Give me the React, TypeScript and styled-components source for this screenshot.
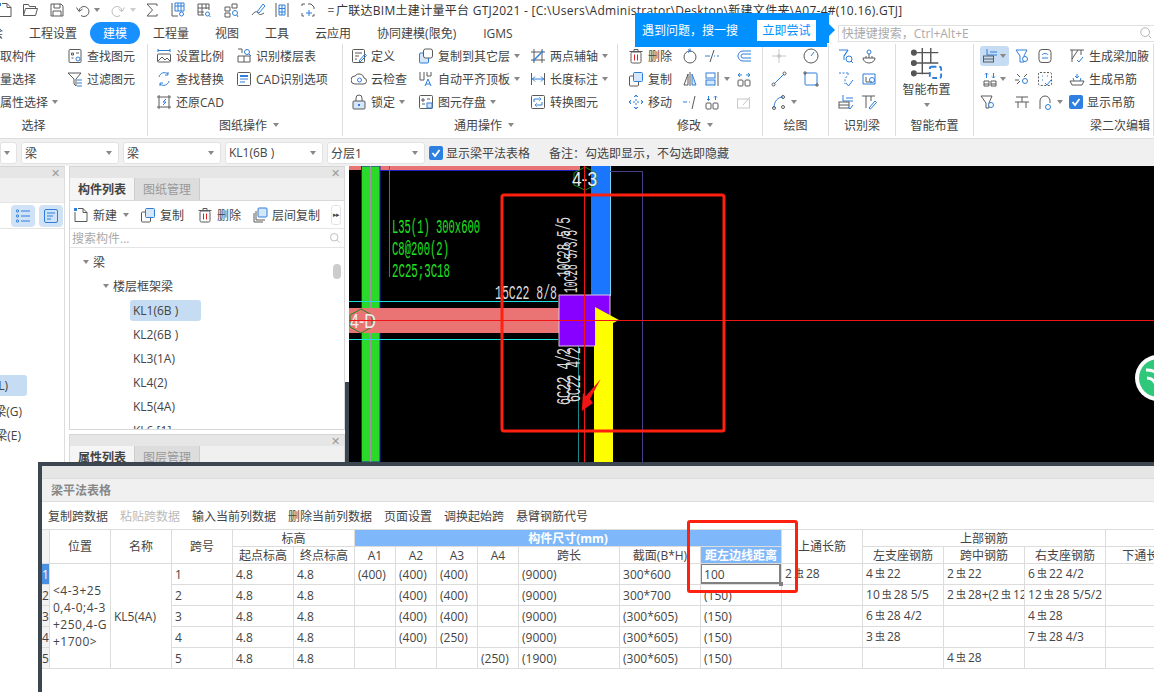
import React, { ReactNode } from 'react';
import styled, { createGlobalStyle } from 'styled-components';

const D = '#5a5a5a';
const B = '#2e7fdc';
const L = '#d5e7fb';
const FONT = '"Open Sans", "Noto Sans CJK SC", sans-serif';

const Global = createGlobalStyle`
  html, body { margin: 0; padding: 0; width: 1154px; height: 692px; overflow: hidden; background: #fff; }
  body { font-family: ${FONT}; font-size: 12px; color: #444; }
  * { box-sizing: border-box; }
`;

const icons: Record<string, ReactNode> = {
  newFile: <><path d="M5 1.5h5l4 4v9H2V5" /><path d="M10 1.5v4h4" /><rect x="1" y="1" width="3" height="3" fill={B} stroke="none" /></>,
  folder: <path d="M1.5 13.5v-11h5l1 2h6v2M1.5 13.5l2-7h12l-2 7z" />,
  save: <><path d="M2 2h10l2 2v10H2z" /><path d="M5 2v4h6V2M4 14V9h8v5" /></>,
  undo: <><path d="M4 9a5 5 0 1 1 2 4.5" /><path d="M1.5 5.5l2.5 4 3.5-2.5" /></>,
  redo: <g stroke="#bbb"><path d="M12 9a5 5 0 1 0-2 4.5" /><path d="M14.5 5.500l-2.500 4-3.500-2.500" /></g>,
  sigma: <path d="M13 4V2H3l5.500 6L3 14h10v-2" />,
  tblSearch: <><path d="M2 1v13h6" /><path d="M5 1h9v8H5z" stroke={B} /><path d="M5 4h9M8 1v8M11 1v8" stroke={B} /><circle cx="11.500" cy="12" r="2" stroke={B} /></>,
  gridSearch: <><path d="M2 2h11v6M2 2v11h6M2 6h11M2 10h6M6 2v11M10 2v5" /><circle cx="11.500" cy="12" r="2" stroke={B} /><path d="M13 13.500l1.500 1.500" stroke={B} /></>,
  pointSearch: <><path d="M2 5h5v4H2zM2 11h5v4H2zM9 2h5v4H9z" /><circle cx="12" cy="11" r="2.500" stroke={B} /><path d="M14 13l1 2" stroke={B} /></>,
  pen: <><path d="M2 13c3-4 5-4 6-2s3 2 6 0" /><path d="M7 10l6-8 2 2-6 7z" stroke={B} /></>,
  cols: <><path d="M2 1v14M14 1v14" /><path d="M5 3h6v10H5zM5 6.500h6M5 10h6M8 3v10" stroke={B} /></>,
  dashAdd: <><path d="M2 4V2h3M8 2h3l3 3v2M14 12v2h-2M4 14H2v-3" /><path d="M9 8v6M6 11h6" stroke={B} /></>,
  find: <><rect x="2" y="1.500" width="12" height="13" rx="1" /><path d="M4.500 5h2v2h-2zM9 5h3M4.500 10h2" /><circle cx="11" cy="11" r="2" stroke={B} /></>,
  filter: <><path d="M1 2h13L9 8v7l-2-2V8z" /><path d="M10 9h5M10 12h5M10 15h5" stroke={B} /></>,
  scale: <><path d="M2 1v3M14 1v3M2 2.500h12" stroke={B} /><rect x="1.500" y="6" width="13" height="8" rx="1" /><path d="M2 13l4-4 3 3 2-2 3 3" /></>,
  floors: <><path d="M2 1h4v4M2 8h12M8 8v6M2 8v6h12V8" /><circle cx="11" cy="4" r="2.500" stroke={B} /><path d="M13 6l2 2" stroke={B} /></>,
  replace: <g stroke={B}><path d="M3 6a5.500 5.500 0 0 1 9-3M13 10a5.500 5.500 0 0 1-9 3" /><path d="M12 1v3h-3M4 15v-3h3" /></g>,
  cad: <><rect x="1.500" y="1.500" width="13" height="13" rx="1" /><path d="M4 8h8M4 11h5" stroke={B} /><path d="M4 5h8" stroke={B} strokeWidth="2" /></>,
  restore: <><path d="M3 1v14M13 1v14M1 3h14M1 13h14" /><path d="M10 5L7 8h3L7 11" stroke={B} /></>,
  define: <><rect x="1.500" y="1.500" width="12" height="13" rx="1" /><path d="M4 5h7M4 8h4M4 11h2" /><path d="M8 13l6-7 1.500 1.500L9 14z" stroke={B} /></>,
  cloud: <><path d="M4 13a4 4 0 0 1 0-8 5 5 0 0 1 9 2 3 3 0 0 1-1 6z" /><circle cx="8.500" cy="9" r="2" stroke={B} /></>,
  lock: <><rect x="2" y="7" width="12" height="8" rx="1" fill={L} stroke={D} /><path d="M5 7V4a3 3 0 0 1 6 0v3" /><path d="M8 10v2" stroke={B} strokeWidth="2" /></>,
  copyLayer: <><rect x="1.500" y="5" width="9" height="10" rx="1" stroke={B} fill={L} /><rect x="5.500" y="1" width="9" height="9" rx="2" fill="#fff" /></>,
  align: <><path d="M2 1v8h4V1M9 1v4h4V1" /><path d="M7 15l3-7 3 7M8 13h4" stroke={B} /></>,
  store: <><rect x="1.500" y="1.500" width="13" height="13" rx="1" /><path d="M4 5h2v2H4zM9 5h3M4 10h3" /><rect x="9" y="9" width="5" height="5" fill={L} stroke={B} /></>,
  twoPoint: <><path d="M4 1v14M12 1v14M1 4h14M1 12h14" /><path d="M3 13L13 3" stroke={B} strokeWidth="1.500" /></>,
  length: <><path d="M1.500 2v12M14.500 2v12" /><path d="M2 8h12M5 5.500L2.500 8 5 10.500M11 5.500L13.500 8 11 10.500" stroke={B} /></>,
  convert: <><rect x="1.500" y="1.500" width="13" height="13" rx="1" /><path d="M4 8V5h5M9 3.500L11 5 9 6.500M12 8v3H7M7 9.500L5 11l2 1.500" stroke={B} /></>,
  del: <><rect x="3" y="4" width="10" height="11" rx="1.500" /><path d="M1.500 3.500h13M6 3.500V1.500h4v2" /><path d="M6.500 6.500v6M9.500 6.500v6" stroke="#e02020" /></>,
  copy: <><rect x="1.500" y="5" width="9" height="10" rx="1" /><rect x="5.500" y="1.500" width="9" height="9" rx="1" fill={L} stroke={B} /></>,
  layerCopy: <><path d="M2 6v9h9M4 4v9h9" /><rect x="6" y="1" width="9" height="9" rx="1" fill={L} stroke={B} /></>,
  move: <g stroke={B}><path d="M8 1v14M1 8h14" strokeDasharray="2 2" /><path d="M6 3l2-2 2 2M6 13l2 2 2-2M3 6L1 8l2 2M13 6l2 2-2 2" /></g>,
  rotate: <><circle cx="8" cy="9" r="6" /><path d="M8 3V0.500" stroke={B} /><path d="M6 1.500L8.500 3 6 4.500" stroke={B} /></>,
  extend: <><path d="M1 8h5M10 8h1M13 8h2" stroke={B} /><path d="M10 2L6 14" /></>,
  offset: <g stroke={B}><path d="M15 3H7a5 5 0 0 0 0 10h8" /><path d="M15 6H7a2 2 0 0 0 0 4h8" /></g>,
  mirror: <><path d="M8 1v14" /><path d="M6 3L2 14h4z" /><path d="M10 3l4 11h-4z" fill={L} stroke={B} /></>,
  alignBox: <><path d="M14 1v14" /><rect x="2" y="2" width="9" height="5" stroke={B} /><rect x="2" y="9" width="9" height="5" fill={L} stroke={B} /></>,
  split: <><rect x="2" y="9" width="5" height="6" rx="1" /><rect x="9" y="9" width="5" height="6" rx="1" /><path d="M4.500 2v4M3 5l1.500 1.500L6 5M11.500 2v4M10 3.500L11.500 2 13 3.500" stroke={B} /></>,
  brk: <><path d="M1 8h4M7 8h1" stroke={B} /><path d="M13 2l-3 13" /></>,
  join: <><rect x="2" y="9" width="5" height="6" rx="1" /><rect x="9" y="9" width="5" height="6" rx="1" /><path d="M4 2L2 4l2 2M12 2l2 2-2 2M2 4h4M10 4h4" stroke={B} /></>,
  edit: <g stroke="#c8c8c8"><rect x="1.500" y="5" width="12" height="9" /><path d="M7 11l7-8" /></g>,
  cross: <g stroke="#c8c8c8"><path d="M8 1v5M8 10v5M1 8h5M10 8h5" /><circle cx="8" cy="8" r="1.500" fill="#c8c8c8" /></g>,
  gauge: <><circle cx="8" cy="8" r="7" /><path d="M8 8l3-4" stroke={B} /></>,
  line: <><path d="M3 13L13 3" stroke={B} /><circle cx="2.500" cy="13.500" r="1.500" /><circle cx="13.500" cy="2.500" r="1.500" /></>,
  rect: <><rect x="2" y="2" width="12" height="12" rx="1" stroke={B} /><path d="M1 1h2v2H1zM13 13h2v2h-2z" /></>,
  arc: <><path d="M3 14C3 7 7 3 12 3" stroke={B} /><circle cx="3" cy="14" r="1.500" /><circle cx="12" cy="3" r="1.500" /><circle cx="12" cy="13" r="1.500" /></>,
  beamCheck: <g stroke={B}><path d="M1 2h9L6 8v4" /><path d="M10 2L6 8" /><circle cx="11" cy="11" r="3" /><path d="M13 13l2 2" /></g>,
  basket: <><path d="M2 10a6 5 0 0 0 12 0H2z" /><circle cx="8" cy="4" r="2" stroke={B} /><path d="M5 10V8M8 10V6M11 10V8" /></>,
  dashCheck: <g stroke={B}><path d="M1 2h10l-4 6v5" strokeDasharray="2 1.500" /><path d="M8 12l2.500 3L15 9" /></g>,
  beamFind: <><path d="M2 3h12v10H2z" stroke={B} /><path d="M5 6v5h6" /><circle cx="11" cy="9" r="2.500" stroke={B} /></>,
  beamList: <><path d="M5 1v6h10M8 4h7" stroke={B} /><rect x="1" y="8" width="10" height="6" /><path d="M1 11h10" /><path d="M10 13l2 2 3-4" stroke={B} /></>,
  beamPen: <><path d="M1 2h13M5 2v12M10 2v5" /><path d="M8 14l6-7 1.500 1.500L9.500 15z" stroke={B} /></>,
  beamTop: <><path d="M5 1v6h10M8 4h7" stroke={B} /><rect x="1.500" y="8" width="10" height="6" /><path d="M1.500 11h10" /></>,
  funnel: <><path d="M2 2h11l-3 6v6H6V8z" stroke={B} /><circle cx="11" cy="11" r="2.500" stroke={B} fill="#fff" /></>,
  beamBox: <><rect x="2" y="1.500" width="12" height="13" rx="3" /><path d="M5 7c1-2 5-2 6 0M5 10h6" stroke={B} /></>,
  tri: <><path d="M2 10h5v5H2zM9 10h5v5H9zM2 13h5M9 13h5" /><path d="M4.500 2v5M3 3.500L4.500 2 6 3.500M11.500 2v5M10 5.500L11.500 7 13 5.500" stroke={B} /></>,
  spark: <><path d="M3 3l3 3M13 3l-3 3M1 9h4M3 13l3-3" /><circle cx="11" cy="10" r="2.500" stroke={B} /></>,
  dotsCheck: <><rect x="1.500" y="1.500" width="13" height="13" rx="1.500" strokeDasharray="2 1.500" /><path d="M5 5h1M10 5h1M5 9h1" stroke={B} /><path d="M8 12l2 2 4-5" stroke={B} /></>,
  funnelS: <><path d="M1 2h11l-3 7v5H6V9z" /><circle cx="11" cy="11" r="2.500" stroke={B} fill="#fff" /></>,
  hang: <path d="M2 3h12M1 8h14M4 8v6M12 8v6M8 3v5" />,
  loop: <><path d="M3 15V7a5 5 0 0 1 10 0v2" /><circle cx="11" cy="13" r="2.500" stroke={B} /></>,
  haunch: <><path d="M1 2h14M3 2v12M12 2v5" /><path d="M3 11l6-9" /><path d="M8 12l2 2 4-5" stroke={B} /></>,
  basketS: <><path d="M1 10h14l-2 4H3z" /><path d="M8 3v4M6 5l2 2 2-2M4 7l1 3M12 7l-1 3" stroke={B} /></>,
  search: <><circle cx="7" cy="7" r="5" stroke="#aaa" /><path d="M11 11l3 3" stroke="#aaa" /></>,
  viewList: <g stroke={B}><path d="M6 3h9M6 8h9M6 13h9" /><circle cx="2.500" cy="3" r="1.200" /><circle cx="2.500" cy="8" r="1.200" /><circle cx="2.500" cy="13" r="1.200" /></g>,
  viewDetail: <g stroke={B}><rect x="1.500" y="1.500" width="13" height="13" rx="1.500" /><path d="M4 5h8M4 8h6M4 11h4" /></g>,
};

const IconSvg = styled.svg<{ $s: number }>`
  width: ${p => p.$s}px;
  height: ${p => p.$s}px;
  flex: none;
  display: block;
  fill: none;
  stroke: ${D};
  stroke-width: 1;
`;
const Ic = ({ n, s = 16 }: { n: string; s?: number }) => (
  <IconSvg $s={s} viewBox="0 0 16 16">{icons[n]}</IconSvg>
);

const Page = styled.div`
  position: relative;
  width: 1154px;
  height: 692px;
  overflow: hidden;
  display: flex;
  flex-direction: column;
  background: #fff;
`;

/* title bar */
const TitleBar = styled.div`
  height: 20px;
  flex: none;
  display: flex;
  align-items: center;
  margin-left: -3px;
  white-space: nowrap;
`;
const TitleSlot = styled.span<{ $g: number; $w?: number }>`
  margin-left: ${p => p.$g}px;
  width: ${p => p.$w ?? 16}px;
  display: flex;
  justify-content: center;
  color: #666;
`;
const TitleText = styled.span`
  margin-left: 1px;
  font-size: 12px;
  letter-spacing: 0.28px;
  color: #333;
`;
const Tri = styled.i<{ $c?: string }>`
  display: inline-block;
  width: 0;
  height: 0;
  border-left: 3px solid transparent;
  border-right: 3px solid transparent;
  border-top: 4px solid ${p => p.$c ?? '#888'};
`;

/* menu bar */
const MenuBar = styled.div`
  height: 24px;
  flex: none;
  display: flex;
  align-items: center;
  padding-top: 2px;
  white-space: nowrap;
`;
const MenuItem = styled.span<{ $g: number; $on?: boolean }>`
  margin-left: ${p => p.$g}px;
  font-size: 12px;
  color: ${p => (p.$on ? '#fff' : '#444')};
  ${p => (p.$on ? 'background:#1890ff;border-radius:11px;height:22px;width:50px;display:flex;align-items:center;justify-content:center;' : '')}
`;
const SearchBox = styled.div`
  flex: 1;
  margin-left: 325px;
  height: 17px;
  border: 1px solid #e0e0e0;
  border-right: none;
  display: flex;
  align-items: center;
  justify-content: space-between;
  padding: 0 1px 0 3px;
  font-size: 12px;
  color: #aaa;
`;

/* ribbon */
const Ribbon = styled.div`
  height: 95px;
  flex: none;
  display: flex;
  border-bottom: 1px solid #ddd;
`;
const Group = styled.div<{ $w: number; $pad?: number }>`
  width: ${p => p.$w}px;
  flex: none;
  height: 92px;
  border-right: 1px solid #ddd;
  display: flex;
  flex-direction: column;
  padding-left: ${p => p.$pad ?? 0}px;
  overflow: hidden;
`;
const GroupBody = styled.div`
  height: 69px;
  display: flex;
  flex: none;
`;
const Col = styled.div<{ $w?: number }>`
  ${p => (p.$w ? `width:${p.$w}px;flex:none;` : 'flex:1;')}
  display: flex;
  flex-direction: column;
`;
const Item = styled.div`
  height: 23px;
  display: flex;
  align-items: center;
  gap: 4px;
  font-size: 12px;
  white-space: nowrap;
  color: #444;
`;
const SelIcon = styled.span<{ $plain?: boolean }>`
  display: flex;
  align-items: center;
  gap: 2px;
  background: ${p => (p.$plain ? 'transparent' : '#c5dcf2')};
  border-radius: 3px;
  height: 20px;
  padding: 0 3px 0 2px;
`;
const GroupLabel = styled.div<{ $dx?: number; $end?: boolean }>`
  flex: 1;
  display: flex;
  align-items: center;
  justify-content: ${p => (p.$end ? 'flex-end' : 'center')};
  gap: 6px;
  padding-right: ${p => p.$dx ?? 0}px;
  font-size: 12px;
  color: #444;
`;
const BigBox = styled.div`
  display: flex;
  flex-direction: column;
  align-items: center;
  width: 100%;
  padding-right: 16px;
  padding-top: 3px;
  font-size: 12px;
  line-height: 17px;
`;
const BigIcon = styled.svg`
  width: 32px;
  height: 32px;
  margin-bottom: 2px;
`;
const BigCaret = styled(Tri)`
  margin-top: 5px;
`;

/* combo bar */
const ComboBar = styled.div`
  height: 27px;
  flex: none;
  background: #f0f0f0;
  display: flex;
  align-items: center;
  gap: 4px;
`;
const Combo = styled.div<{ $w: number }>`
  width: ${p => p.$w}px;
  height: 22px;
  background: #fff;
  border: 1px solid #e2e2e2;
  border-radius: 3px;
  display: flex;
  align-items: center;
  justify-content: space-between;
  padding: 0 6px 0 3px;
  font-size: 12px;
  color: #444;
`;
const CheckBox = styled.span`
  width: 14px;
  height: 14px;
  background: #2e80e0;
  border-radius: 2px;
  display: flex;
  align-items: center;
  justify-content: center;
  flex: none;
`;
const CheckRow = styled.label`
  display: flex;
  align-items: center;
  gap: 3px;
  font-size: 12px;
  white-space: nowrap;
`;
const Note = styled.span`
  margin-left: 15px;
  font-size: 12px;
  white-space: nowrap;
`;
const Check = () => (
  <CheckBox>
    <svg width="10" height="10" viewBox="0 0 10 10"><path d="M1.500 5l2.500 3 4.500-6" fill="none" stroke="#fff" strokeWidth="1.800" /></svg>
  </CheckBox>
);

/* main */
const Main = styled.div`
  flex: 1;
  display: flex;
  min-height: 0;
`;
const SidePanel = styled.div`
  width: 65px;
  flex: none;
  margin-right: 4px;
  border-right: 1px solid #ddd;
  display: flex;
  flex-direction: column;
  overflow: hidden;
`;
const PanelHead = styled.div`
  height: 12px;
  flex: none;
  background: #e6e6e6;
  border-top: 1px solid #d5d5d5;
  display: flex;
  align-items: center;
  justify-content: flex-end;
  padding-right: 4px;
  color: #999;
  font-size: 11px;
  line-height: 10px;
`;
const EmptyTabs = styled.div`
  height: 25px;
  flex: none;
  background: #f0f0f0;
  border-bottom: 1px solid #e5e5e5;
`;
const ViewBar = styled.div`
  height: 26px;
  flex: none;
  border-bottom: 1px solid #e5e5e5;
  display: flex;
  align-items: center;
  gap: 4px;
  padding-left: 11px;
`;
const ViewBtn = styled.span`
  width: 24px;
  height: 22px;
  background: #cfe2f6;
  border-radius: 4px;
  display: flex;
  align-items: center;
  justify-content: center;
`;
const SideTree = styled.div`
  padding-top: 146px;
  display: flex;
  flex-direction: column;
  width: 27px;
`;
const SideRow = styled.div<{ $on?: boolean; $r?: number }>`
  height: ${p => (p.$on ? 21 : 24)}px;
  margin-bottom: ${p => (p.$on ? 3 : 0)}px;
  display: flex;
  align-items: center;
  justify-content: flex-end;
  padding-right: ${p => p.$r ?? 4}px;
  font-size: 12px;
  white-space: nowrap;
  background: ${p => (p.$on ? '#c5dcf2' : 'transparent')};
  border-radius: 0 3px 3px 0;
`;
const SideLabel = styled.span<{ $on?: boolean }>`
  ${p => (p.$on ? 'margin-right:15px;' : '')}
`;
const MidCol = styled.div`
  width: 276px;
  flex: none;
  display: flex;
  flex-direction: column;
  gap: 4px;
`;
const Panel = styled.div<{ $h?: number }>`
  ${p => (p.$h ? `height:${p.$h}px;flex:none;` : 'flex:1;')}
  border: 1px solid #d8d8d8;
  border-top: none;
  display: flex;
  flex-direction: column;
  overflow: hidden;
  min-height: 0;
`;
const Tabs = styled.div`
  height: 23px;
  flex: none;
  background: #f0f0f0;
  display: flex;
  border-bottom: 1px solid #d8d8d8;
`;
const Tab = styled.span<{ $on?: boolean }>`
  width: 65px;
  display: flex;
  align-items: center;
  justify-content: center;
  font-size: 12px;
  font-weight: ${p => (p.$on ? 700 : 400)};
  color: ${p => (p.$on ? '#444' : '#999')};
  background: ${p => (p.$on ? '#f5f5f5' : '#ddd')};
  border-right: 1px solid #ccc;
`;
const ToolRow = styled.div`
  height: 28px;
  flex: none;
  display: flex;
  align-items: center;
  border-bottom: 1px solid #e5e5e5;
  padding-left: 3px;
  font-size: 12px;
  white-space: nowrap;
`;
const Tool = styled.span<{ $g?: number }>`
  display: flex;
  align-items: center;
  gap: 4px;
  margin-left: ${p => p.$g ?? 0}px;
`;
const ToolCaret = styled(Tri)`
  margin-left: 2px;
`;
const MoreBtn = styled.span`
  margin-left: 11px;
  width: 10px;
  height: 20px;
  border: 1px solid #e5e5e5;
  border-radius: 3px;
  font-size: 7px;
  display: flex;
  align-items: center;
  justify-content: center;
  letter-spacing: -1px;
`;
const SearchRow = styled.div`
  height: 19px;
  flex: none;
  display: flex;
  align-items: center;
  justify-content: space-between;
  padding: 0 3px 0 2px;
  color: #aaa;
  font-size: 12px;
  border-bottom: 1px solid #e5e5e5;
`;
const Tree = styled.div`
  position: relative;
  flex: 1;
  overflow: hidden;
  padding-top: 2px;
  font-size: 12px;
  min-height: 0;
`;
const TreeRow = styled.div<{ $l: number }>`
  height: 24px;
  display: flex;
  align-items: center;
  gap: 4px;
  padding-left: ${p => p.$l}px;
  white-space: nowrap;
`;
const TreeLabel = styled.span<{ $on?: boolean }>`
  height: 21px;
  display: flex;
  align-items: center;
  ${p => (p.$on ? 'background:#c5dcf2;border-radius:3px;width:71px;margin-left:-3px;padding-left:3px;' : '')}
`;
const Thumb = styled.span`
  position: absolute;
  left: 263px;
  top: 16px;
  width: 8px;
  height: 15px;
  border-radius: 4px;
  background: #ccc;
`;
const Splitter = styled.div`
  width: 4px;
  flex: none;
  background: linear-gradient(#fff 216px, #3c4650 216px);
`;
const Canvas = styled.div`
  flex: 1;
  background: #000;
  overflow: hidden;
`;
const CanvasSvg = styled.svg`
  display: block;
  width: 805px;
  height: 296px;
  font-family: "Liberation Mono", monospace;
`;

/* callout */
const Callout = styled.div`
  position: absolute;
  left: 635px;
  top: 13px;
  width: 194px;
  height: 34px;
  background: #0090ff;
  color: #fff;
  display: flex;
  align-items: center;
  justify-content: space-between;
  padding: 0 13px 0 7px;
  font-size: 12px;
  clip-path: polygon(0 0, 100% 0, 100% 30px, 192px 30px, 192px 34px, 0 34px);
`;
const CalloutTip = styled.span`
  position: absolute;
  left: 829px;
  top: 24px;
  width: 0;
  height: 0;
  border-left: 6px solid #0090ff;
  border-top: 6px solid transparent;
  border-bottom: 6px solid transparent;
`;
const CalloutBtn = styled.span`
  width: 59px;
  height: 21px;
  background: #fff;
  color: #0090ff;
  display: flex;
  align-items: center;
  justify-content: center;
`;

/* dialog */
const Dialog = styled.div`
  position: absolute;
  left: 38px;
  top: 462px;
  right: 0;
  bottom: 0;
  background: #fff;
  border-top: 4px solid #3c4650;
  border-left: 4px solid #3c4650;
  display: flex;
  flex-direction: column;
  overflow: hidden;
`;
const DlgStrip = styled.div`
  height: 12px;
  flex: none;
  background: #e6e6e6;
`;
const DlgTitle = styled.div`
  height: 24px;
  flex: none;
  background: #f0f0f0;
  border-top: 1px solid #ddd;
  border-bottom: 1px solid #ddd;
  display: flex;
  align-items: center;
  padding-left: 9px;
  font-size: 12px;
  font-weight: 700;
  color: #888;
`;
const DlgTools = styled.div`
  height: 27px;
  flex: none;
  display: flex;
  align-items: center;
  gap: 12px;
  padding-left: 6px;
  font-size: 12px;
  white-space: nowrap;
`;
const DlgTool = styled.span<{ $off?: boolean }>`
  color: ${p => (p.$off ? '#bbb' : '#444')};
`;
const TableWrap = styled.div`
  flex: 1;
  overflow: hidden;
`;
const Grid = styled.table`
  width: 1145px;
  margin-left: -1px;
  table-layout: fixed;
  border-collapse: collapse;
  font-size: 12px;
  color: #444;
  & th, & td {
    border: 1px solid #dcdcdc;
    padding: 0;
    overflow: hidden;
    white-space: nowrap;
    font-weight: 400;
  }
  & th { height: 17px; line-height: 15px; text-align: center; }
  & td { height: 21px; line-height: 19px; padding-left: 3px; }
`;
const HeadBlue = styled.th`
  && { background: #7fb8fa; color: #fff; font-weight: 700; }
`;
const RowHead = styled.td<{ $on?: boolean }>`
  && {
    padding: 0;
    text-align: center;
    background: ${p => (p.$on ? '#4a90e2' : '#f3f3f3')};
    color: ${p => (p.$on ? '#fff' : '#444')};
  }
`;
const CornerHead = styled.th`
  && { background: #f3f3f3; }
`;
const PosCell = styled.td`
  && {
    white-space: normal;
    text-align: left;
    line-height: 17px;
    letter-spacing: 0.5px;
    padding-left: 3px;
  }
`;
const ActiveCell = styled.td`
  && {
    position: relative;
    overflow: visible;
    box-shadow: inset -2px -2px 0 #808080, inset 1px 1px 0 #808080;
  }
`;
const Handle = styled.i`
  position: absolute;
  right: -2px;
  bottom: -2px;
  width: 4px;
  height: 4px;
  background: #808080;
`;
const Bar = styled.span`
  font-size: 10px;
  margin: 0 2px;
  position: relative;
  top: -1px;
`;

/* annotations */
const RedBox = styled.div`
  position: absolute;
  left: 687px;
  top: 520px;
  width: 111px;
  height: 73px;
  border: 3px solid #ff2010;
  border-radius: 3px;
  pointer-events: none;
`;

const row = (icon: string, label: string, caret = false) => (
  <Item key={label}>
    <Ic n={icon} />
    <span>{label}</span>
    {caret && <Tri />}
  </Item>
);
const ic = (icon: string, caret = false) => (
  <Item key={icon}>
    <Ic n={icon} />
    {caret && <Tri />}
  </Item>
);

const Rb = ({ t }: { t: string }) => {
  const parts = t.split('#');
  return (
    <>
      {parts.map((p, i) => (
        <React.Fragment key={i}>
          {i > 0 && <Bar>虫</Bar>}
          {p}
        </React.Fragment>
      ))}
    </>
  );
};

const rows = [
  ['1', '(400)', '(400)', '(400)', '', '(9000)', '300*600', '100', '2#28', '4#22', '2#22', '6#22 4/2'],
  ['2', '', '(400)', '(400)', '', '(9000)', '300*700', '(150)', '', '10#28 5/5', '2#28+(2#12', '12#28 5/5/2'],
  ['3', '', '(400)', '(400)', '', '(9000)', '(300*605)', '(150)', '', '6#28 4/2', '', '4#28'],
  ['4', '', '(400)', '(250)', '', '(9000)', '(300*605)', '(150)', '', '3#28', '', '7#28 4/3'],
  ['5', '', '', '', '(250)', '(1900)', '(300*605)', '(150)', '', '', '4#28', ''],
];
const colW = [8, 61, 61, 61, 61, 61, 41, 41, 41, 41, 101, 81, 81, 81, 81, 81, 81, 81];

const CadDrawing = () => (
  <CanvasSvg viewBox="349 166 805 296">
    <rect x="349" y="166" width="231" height="4" fill="#e87474" />
    <path d="M362 170.500H580" stroke="#2020c0" />
    <rect x="361.500" y="166" width="18.500" height="296" fill="#2bd92b" stroke="#2020c0" />
    <path d="M370.500 166V462" stroke="#999" />
    <path d="M389.500 166V277" stroke="#1f9a1f" />
    <g fill="#22e022" fontSize="20">
      <text x="392" y="233" textLength="88" lengthAdjust="spacingAndGlyphs">L35(1) 300x600</text>
      <text x="392" y="255" textLength="57" lengthAdjust="spacingAndGlyphs">C8@200(2)</text>
      <text x="392" y="277" textLength="58" lengthAdjust="spacingAndGlyphs">2C25;3C18</text>
    </g>
    <path d="M349 301.500H558M349 339.500H558" stroke="#1fe0e0" />
    <rect x="349" y="308" width="210" height="25" fill="#ea7474" />
    <polygon points="361,309 372,315 372,327 361,333 350,327 350,315" fill="none" stroke="#1f8a1f" />
    <rect x="591" y="166" width="19" height="130" fill="#1a75ff" />
    <path d="M610.500 166V296" stroke="#7fd4ff" />
    <path d="M610 171.500H642.500V462" fill="none" stroke="#4b3c8a" />
    <path d="M578.500 346V462" stroke="#1a8a8a" />
    <rect x="559" y="295" width="51" height="51" fill="#8800ff" stroke="#e0c8e0" />
    <polygon points="595,307 619,320 613,323 613,462 594,462 594,346 595,346" fill="#ffff00" />
    <polygon points="585,167 596,173 596,185 585,190 574,185 574,173" fill="none" stroke="#1f8a1f" />
    <g fill="#eee" fontSize="20" fontFamily="Liberation Sans">
      <text x="572" y="186" textLength="25" lengthAdjust="spacingAndGlyphs">4-3</text>
      <text x="350" y="328" textLength="26" lengthAdjust="spacingAndGlyphs">4-D</text>
    </g>
    <g fill="#ddd" fontSize="20">
      <text x="495" y="299" textLength="62" lengthAdjust="spacingAndGlyphs">15C22 8/8</text>
      <text transform="translate(570 277) rotate(-90)" textLength="60" lengthAdjust="spacingAndGlyphs">10C28 5/5</text>
      <text transform="translate(577 293) rotate(-90)" textLength="63" lengthAdjust="spacingAndGlyphs">10C28 5/3/5</text>
      <text transform="translate(570 405) rotate(-90)" textLength="57" lengthAdjust="spacingAndGlyphs">6C22 4/2</text>
      <text transform="translate(580 402) rotate(-90)" textLength="55" lengthAdjust="spacingAndGlyphs">6C22 4/2</text>
    </g>
    <path d="M349 320.500H1154M584.500 166V462" stroke="#f01414" />
    <rect x="502" y="195" width="222" height="236" rx="2" fill="none" stroke="#ff2010" strokeWidth="3" />
    <path d="M600.700 379L590 399L593 403L581.700 411L583 393L586 396Z" fill="#f01414" />
    <circle cx="1158" cy="378" r="23" fill="#fff" />
    <circle cx="1158" cy="378" r="19" fill="#2fc77a" />
    <path d="M1146 370a17 17 0 0 1 14 6M1147 378a9 9 0 0 1 8 5" fill="none" stroke="#fff" strokeWidth="3" />
  </CanvasSvg>
);

export default function App() {
  return (
    <Page>
      <Global />
      <TitleBar>
        <TitleSlot $g={0}><Ic n="newFile" /></TitleSlot>
        <TitleSlot $g={9}><Ic n="folder" /></TitleSlot>
        <TitleSlot $g={11}><Ic n="save" /></TitleSlot>
        <TitleSlot $g={10}><Ic n="undo" /></TitleSlot>
        <TitleSlot $g={2} $w={8}><Tri /></TitleSlot>
        <TitleSlot $g={9}><Ic n="redo" /></TitleSlot>
        <TitleSlot $g={3} $w={8}><Tri $c="#ccc" /></TitleSlot>
        <TitleSlot $g={7}><Ic n="sigma" /></TitleSlot>
        <TitleSlot $g={10}><Ic n="tblSearch" /></TitleSlot>
        <TitleSlot $g={10}><Ic n="gridSearch" /></TitleSlot>
        <TitleSlot $g={11}><Ic n="pointSearch" /></TitleSlot>
        <TitleSlot $g={11}><Ic n="pen" /></TitleSlot>
        <TitleSlot $g={8}><Ic n="cols" /></TitleSlot>
        <TitleSlot $g={10}><Ic n="dashAdd" /></TitleSlot>
        <TitleSlot $g={11} $w={8}>=</TitleSlot>
        <TitleText>广联达BIM土建计量平台 GTJ2021 - [C:\Users\Administrator\Desktop\新建文件夹\A07-4#(10.16).GTJ]</TitleText>
      </TitleBar>

      <MenuBar>
        <MenuItem $g={-9}>绘</MenuItem>
        <MenuItem $g={26}>工程设置</MenuItem>
        <MenuItem $g={13} $on>建模</MenuItem>
        <MenuItem $g={13}>工程量</MenuItem>
        <MenuItem $g={26}>视图</MenuItem>
        <MenuItem $g={26}>工具</MenuItem>
        <MenuItem $g={26}>云应用</MenuItem>
        <MenuItem $g={26}>协同建模(限免)</MenuItem>
        <MenuItem $g={27}>IGMS</MenuItem>
        <SearchBox>
          快捷键搜索，Ctrl+Alt+E
          <Ic n="search" s={14} />
        </SearchBox>
      </MenuBar>

      <Ribbon>
        <Group $w={148}>
          <GroupBody>
            <Col $w={67}>
              <Item>取构件</Item>
              <Item>量选择</Item>
              <Item>属性选择<Tri /></Item>
            </Col>
            <Col>
              {row('find', '查找图元')}
              {row('filter', '过滤图元')}
            </Col>
          </GroupBody>
          <GroupLabel $dx={80}>选择</GroupLabel>
        </Group>
        <Group $w={195} $pad={8}>
          <GroupBody>
            <Col $w={80}>
              {row('scale', '设置比例')}
              {row('replace', '查找替换')}
              {row('restore', '还原CAD')}
            </Col>
            <Col>
              {row('floors', '识别楼层表')}
              {row('cad', 'CAD识别选项')}
            </Col>
          </GroupBody>
          <GroupLabel>图纸操作<Tri /></GroupLabel>
        </Group>
        <Group $w={275} $pad={8}>
          <GroupBody>
            <Col $w={67}>
              {row('define', '定义')}
              {row('cloud', '云检查')}
              {row('lock', '锁定', true)}
            </Col>
            <Col $w={112}>
              {row('copyLayer', '复制到其它层', true)}
              {row('align', '自动平齐顶板', true)}
              {row('store', '图元存盘', true)}
            </Col>
            <Col>
              {row('twoPoint', '两点辅轴', true)}
              {row('length', '长度标注', true)}
              {row('convert', '转换图元')}
            </Col>
          </GroupBody>
          <GroupLabel>通用操作<Tri /></GroupLabel>
        </Group>
        <Group $w={145} $pad={10}>
          <GroupBody>
            <Col $w={54}>
              {row('del', '删除')}
              {row('copy', '复制')}
              {row('move', '移动')}
            </Col>
            <Col $w={22}>{ic('rotate')}{ic('mirror')}{ic('brk')}</Col>
            <Col $w={32}>{ic('extend')}{ic('alignBox', true)}{ic('split')}</Col>
            <Col>{ic('offset')}{ic('join')}{ic('edit')}</Col>
          </GroupBody>
          <GroupLabel>修改<Tri /></GroupLabel>
        </Group>
        <Group $w={66} $pad={8}>
          <GroupBody>
            <Col $w={32}>{ic('cross')}{ic('line')}{ic('arc', true)}</Col>
            <Col>{ic('gauge')}{ic('rect')}</Col>
          </GroupBody>
          <GroupLabel $dx={8}>绘图</GroupLabel>
        </Group>
        <Group $w={67} $pad={9}>
          <GroupBody>
            <Col $w={23}>{ic('beamCheck')}{ic('dashCheck')}{ic('beamList')}</Col>
            <Col>{ic('basket')}{ic('beamFind')}{ic('beamPen')}</Col>
          </GroupBody>
          <GroupLabel $dx={9}>识别梁</GroupLabel>
        </Group>
        <Group $w={78}>
          <GroupBody>
            <BigBox>
              <BigIcon viewBox="0 0 34 34" fill="none" stroke="#555" strokeWidth="1.500">
                <path d="M5 6h24M5 17h24M12 1v28M21 1v16" />
                <circle cx="3" cy="6" r="2.500" fill="#555" />
                <circle cx="3" cy="17" r="2.500" fill="#555" />
                <circle cx="3" cy="28" r="2.500" fill="#555" />
                <path d="M6 28h14" />
                <rect x="20" y="21" width="12" height="12" rx="2" stroke="#2e7fdc" strokeWidth="2" strokeDasharray="5 3" />
              </BigIcon>
              智能布置
              <BigCaret />
            </BigBox>
          </GroupBody>
          <GroupLabel>智能布置</GroupLabel>
        </Group>
        <Group $w={180} $pad={6}>
          <GroupBody>
            <Col $w={34}>
              <Item><SelIcon><Ic n="beamTop" /><Tri /></SelIcon></Item>
              <Item><SelIcon $plain><Ic n="tri" /><Tri /></SelIcon></Item>
              {ic('funnelS')}
            </Col>
            <Col $w={23}>{ic('funnel')}{ic('spark')}{ic('hang')}</Col>
            <Col $w={32}>{ic('beamBox')}{ic('dotsCheck')}{ic('loop', true)}</Col>
            <Col>
              {row('haunch', '生成梁加腋')}
              {row('basketS', '生成吊筋')}
              <Item><Check />显示吊筋</Item>
            </Col>
          </GroupBody>
          <GroupLabel $end $dx={3}>梁二次编辑</GroupLabel>
        </Group>
      </Ribbon>

      <ComboBar>
        <Combo $w={17}><span /><Tri /></Combo>
        <Combo $w={98}>梁<Tri /></Combo>
        <Combo $w={98}>梁<Tri /></Combo>
        <Combo $w={98}>KL1(6B )<Tri /></Combo>
        <Combo $w={98}>分层1<Tri /></Combo>
        <CheckRow><Check />显示梁平法表格</CheckRow>
        <Note>备注：勾选即显示，不勾选即隐藏</Note>
      </ComboBar>

      <Main>
        <SidePanel>
          <PanelHead>✕</PanelHead>
          <EmptyTabs />
          <ViewBar>
            <ViewBtn><Ic n="viewList" /></ViewBtn>
            <ViewBtn><Ic n="viewDetail" /></ViewBtn>
          </ViewBar>
          <SideTree>
            <SideRow $on><SideLabel $on>L)</SideLabel></SideRow>
            <SideRow $r={5}>梁(G)</SideRow>
            <SideRow $r={6}>梁(E)</SideRow>
          </SideTree>
        </SidePanel>
        <MidCol>
          <Panel $h={264}>
            <PanelHead>✕</PanelHead>
            <Tabs><Tab $on>构件列表</Tab><Tab>图纸管理</Tab></Tabs>
            <ToolRow>
              <Tool><Ic n="newFile" />新建<ToolCaret /></Tool>
              <Tool $g={11}><Ic n="copy" />复制</Tool>
              <Tool $g={13}><Ic n="del" />删除</Tool>
              <Tool $g={11}><Ic n="layerCopy" />层间复制</Tool>
              <MoreBtn>▸▸</MoreBtn>
            </ToolRow>
            <SearchRow>搜索构件...<Ic n="search" s={12} /></SearchRow>
            <Tree>
              <TreeRow $l={13}><Tri />梁</TreeRow>
              <TreeRow $l={33}><Tri />楼层框架梁</TreeRow>
              <TreeRow $l={63}><TreeLabel $on>KL1(6B )</TreeLabel></TreeRow>
              <TreeRow $l={63}><TreeLabel>KL2(6B )</TreeLabel></TreeRow>
              <TreeRow $l={63}><TreeLabel>KL3(1A)</TreeLabel></TreeRow>
              <TreeRow $l={63}><TreeLabel>KL4(2)</TreeLabel></TreeRow>
              <TreeRow $l={63}><TreeLabel>KL5(4A)</TreeLabel></TreeRow>
              <TreeRow $l={63}><TreeLabel>KL6 [1]</TreeLabel></TreeRow>
              <Thumb />
            </Tree>
          </Panel>
          <Panel>
            <PanelHead>✕</PanelHead>
            <Tabs><Tab $on>属性列表</Tab><Tab>图层管理</Tab></Tabs>
          </Panel>
        </MidCol>
        <Splitter />
        <Canvas><CadDrawing /></Canvas>
      </Main>

      <Callout>
        遇到问题，搜一搜
        <CalloutBtn>立即尝试</CalloutBtn>
      </Callout>
      <CalloutTip />

      <Dialog>
        <DlgStrip />
        <DlgTitle>梁平法表格</DlgTitle>
        <DlgTools>
          <DlgTool>复制跨数据</DlgTool>
          <DlgTool $off>粘贴跨数据</DlgTool>
          <DlgTool>输入当前列数据</DlgTool>
          <DlgTool>删除当前列数据</DlgTool>
          <DlgTool>页面设置</DlgTool>
          <DlgTool>调换起始跨</DlgTool>
          <DlgTool>悬臂钢筋代号</DlgTool>
        </DlgTools>
        <TableWrap>
          <Grid>
            <colgroup>
              {colW.map((w, i) => <col key={i} width={w} />)}
            </colgroup>
            <thead>
              <tr>
                <CornerHead rowSpan={2} />
                <th rowSpan={2}>位置</th>
                <th rowSpan={2}>名称</th>
                <th rowSpan={2}>跨号</th>
                <th colSpan={2}>标高</th>
                <HeadBlue colSpan={7}>构件尺寸(mm)</HeadBlue>
                <th rowSpan={2}>上通长筋</th>
                <th colSpan={3}>上部钢筋</th>
                <th />
              </tr>
              <tr>
                <th>起点标高</th>
                <th>终点标高</th>
                <th>A1</th>
                <th>A2</th>
                <th>A3</th>
                <th>A4</th>
                <th>跨长</th>
                <th>截面(B*H)</th>
                <HeadBlue>距左边线距离</HeadBlue>
                <th>左支座钢筋</th>
                <th>跨中钢筋</th>
                <th>右支座钢筋</th>
                <th>下通长筋</th>
              </tr>
            </thead>
            <tbody>
              {rows.map((r, i) => (
                <tr key={r[0]}>
                  <RowHead $on={i === 0}>{r[0]}</RowHead>
                  {i === 0 && (
                    <>
                      <PosCell rowSpan={5}>&lt;4-3+25<br />0,4-0;4-3<br />+250,4-G<br />+1700&gt;</PosCell>
                      <td rowSpan={5}>KL5(4A)</td>
                    </>
                  )}
                  <td>{r[0]}</td>
                  <td>4.8</td>
                  <td>4.8</td>
                  {r.slice(1, 7).map((v, j) => <td key={j}>{v}</td>)}
                  {i === 0
                    ? <ActiveCell>{r[7]}<Handle /></ActiveCell>
                    : <td>{r[7]}</td>}
                  {r.slice(8).map((v, j) => <td key={j}><Rb t={v} /></td>)}
                  <td />
                </tr>
              ))}
            </tbody>
          </Grid>
        </TableWrap>
      </Dialog>
      <RedBox />
    </Page>
  );
}
